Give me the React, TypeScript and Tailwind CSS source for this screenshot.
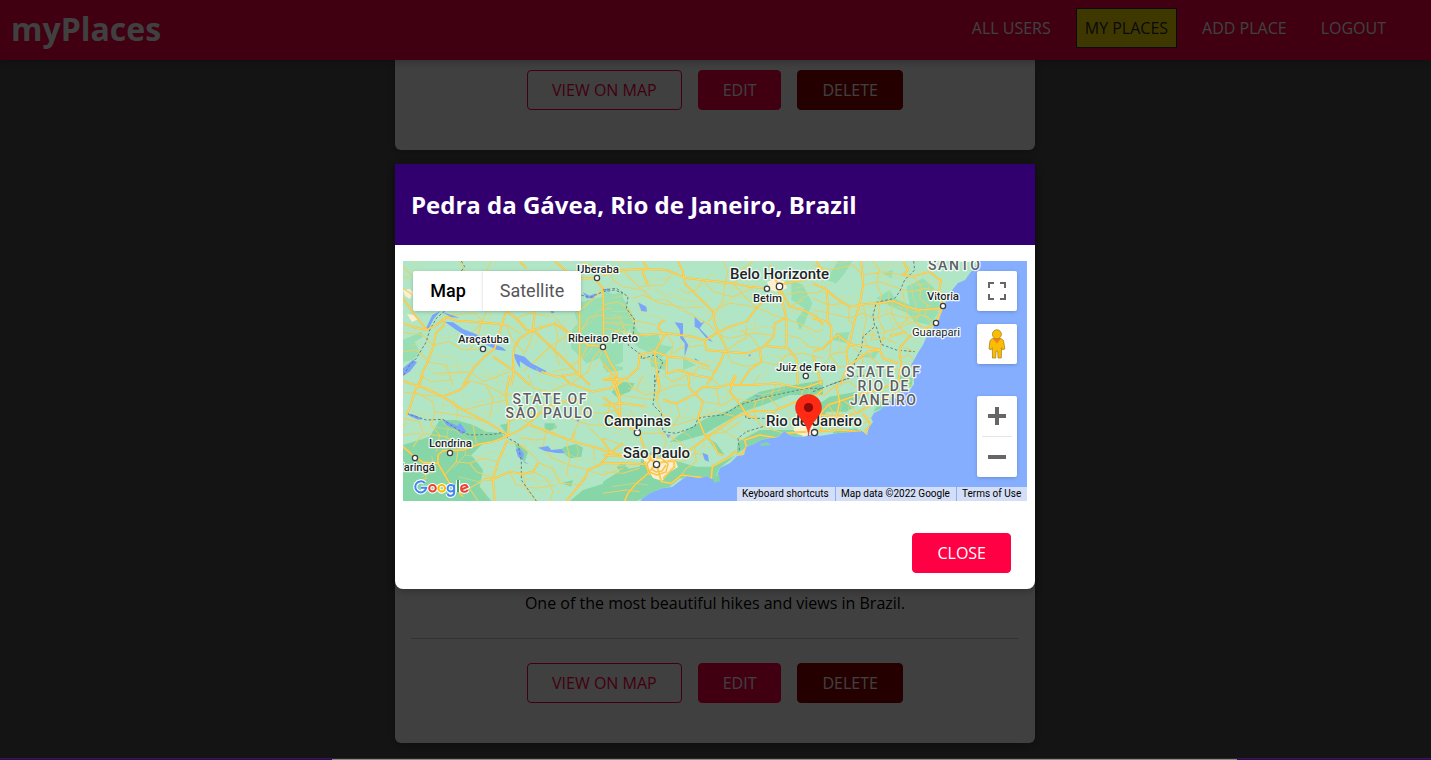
import type { ReactNode } from 'react';

const openSans = "font-['Open_Sans',sans-serif]";
const roboto = "font-[Roboto,sans-serif]";

function Button({ kind = 'solid', children }: { kind?: 'solid' | 'inverse' | 'danger'; children: ReactNode }) {
  const look = {
    solid: 'border-[#ff0044] bg-[#ff0044] text-white',
    inverse: 'border-[#ff0044] bg-transparent text-[#ff0044]',
    danger: 'border-[#900000] bg-[#900000] text-white',
  }[kind];
  return <button className={`h-10 shrink-0 rounded border px-6 text-base leading-[22px] ${look}`}>{children}</button>;
}

function PlaceActions() {
  return (
    <div className="flex justify-center gap-4">
      <Button kind="inverse">VIEW ON MAP</Button>
      <Button>EDIT</Button>
      <Button kind="danger">DELETE</Button>
    </div>
  );
}

const LAND =
  'M0 0H576L562 19 555 22 550 28 545 35 543 41 540 47 536 59 531 65 529 71 523 77 520 84 516 90 511 99 508 104 511 112 511 123 507 129 499 130 493 137 484 142 477 149 471 152 468 157 470 161 466 166 464 174 459 170 449 171 435 172 417 175 409 173 401 176 388 175 381 170 375 176 367 177 358 179 351 183 343 186 341 194 334 195 327 202 317 207 314 215 309 218 304 215 296 217 284 215 277 220 269 226 260 227 247 232 240 237 237 240H0Z';

// Each sheet holds paths drawn at three times the map's scale, with its own offset.
type Sheet = { x: number; y: number; forest: string; water: string; major: string; minor: string; border: string };

const SHEETS: Sheet[] = [
  {
    x: 0,
    y: -6,
    forest:
      'M535 140L600 125 660 110V320L610 345 590 310 550 325 505 280 498 235 525 205 515 175ZM0 255L55 230 60 245 35 260 50 290 30 315 0 320ZM605 330L660 335V345L610 352Z',
    water:
      'M125 200L150 202 180 222 220 238 245 255 300 278 310 288 280 284 235 262 200 250 160 225ZM330 295L365 305 385 325 430 348 425 357 390 343 370 332 350 318 352 340 342 325ZM0 340L30 315 42 322 20 350 0 362ZM88 180L112 168 92 192 75 225 70 218ZM540 112L560 122 578 115 572 130 550 130ZM440 155L455 174 445 174ZM115 170L170 188 145 187Z',
    major:
      'M0 205L35 218 70 225 100 210 130 185 160 197 210 200 250 203 310 209M125 185L122 212 98 235 92 270 75 318 58 352 50 390M0 130L35 180 70 222M310 168L295 215 285 250 275 280 245 305 215 335 180 390M310 168L340 190 370 225 390 225 455 205 500 238 555 270 600 275M530 70L575 70 600 100 602 200 600 275 620 320 640 350 645 380M390 225L350 250 333 280 330 320 332 350 325 390M390 225L470 300 525 355 560 390M270 305L330 345 380 390M530 168L530 360M350 18L370 40M455 18L490 48M395 168L390 225M530 355L460 365 415 350',
    minor:
      'M0 35L25 60M170 18L185 48M265 18L250 48M535 20L575 35 660 45M0 290L40 285 75 315M0 232L60 240 90 270 140 260 180 285 240 282M70 320L130 330 150 390M90 355L200 350 240 380 320 350M110 200L150 180 215 175 240 200 210 230 190 265M310 209L350 235M310 210L325 250 360 290M250 170L235 205 225 245 200 285M340 190L380 175 440 185M440 168L475 210 510 245M390 225L380 265 360 300M455 205L465 245 455 290 470 330M500 238L440 275 400 315 360 350M555 270L535 310 500 340 450 350M600 275L570 310 555 350 500 390M600 100L550 150 520 175M603 180L560 185 540 220 500 250M600 200L650 210M600 260L640 230 660 230M0 100L30 120M0 65L20 70',
    border: 'M175 18L185 35 175 48M125 168L100 190 80 225 70 260 55 285 40 310 20 330 0 365M535 120L560 128 600 110 635 105 660 115',
  },
  {
    x: 200,
    y: -6,
    forest:
      'M0 105L60 128 80 165 95 190 75 230 0 215ZM565 75L600 90 628 145 605 205 590 225 580 195 605 160 565 135ZM85 190L105 230 130 245 165 235 175 270 210 275 175 310 110 280 80 255ZM140 305L190 315 185 345 145 335ZM0 325L60 345 0 340ZM240 310L280 330 240 345Z',
    water:
      'M105 142L130 155 132 170 115 168ZM215 202L240 205 240 245 256 270 245 305 245 265 232 250 230 225ZM275 185L295 205 305 198 290 220 330 262 315 255 285 220 275 215ZM435 300L445 298 440 305ZM275 310L290 318 275 314ZM0 105L15 100 20 110Z',
    major:
      'M0 60L60 45 120 42 190 45 245 68 300 75 390 85 440 95 490 100M225 18L240 50 245 85 300 140 330 170 335 205 350 240 370 280M120 18L130 35 120 55 135 90M500 120L460 160 430 200 380 215 340 235 305 257 270 245 190 235 110 240M155 290L185 240 165 220 170 205 185 195M155 290L110 298 105 340 70 372 0 375M155 290L200 305 250 310 320 335M305 257L310 285 365 290 430 295 470 282 485 272 510 275 555 280 580 310 585 390M525 105L540 145 550 190 550 280M370 280L350 325 325 370 310 390M470 282L475 320 440 345 410 390M500 30L525 90 600 75 640 60 660 75M530 100L560 155 600 165 640 185 660 210M485 272L512 245 515 205 545 190M192 305L190 355 230 345 270 360 320 368M155 290L165 390M640 18L660 50M0 150L0 165M0 325L40 370 45 390',
    minor:
      'M20 45L30 75 60 95 120 105 150 135 190 135 225 160 300 155M60 45L105 95 180 90 205 60M90 130L120 120 170 145 235 155M300 75L280 105 250 115 230 100M300 75L330 110 390 125 450 100M360 18L375 50 365 90 360 135 340 170 315 200M450 18L410 50 395 90 430 130 460 155M320 170L380 145 430 150 480 165M0 150L45 140 80 165 90 195 160 210M0 190L50 190 70 235M0 220L60 230 110 240M190 235L210 265 205 300M350 240L380 250 450 235 510 240M365 290L400 265 430 250 430 210M470 282L450 250 415 225M370 290L385 320 430 335 470 325M475 320L520 330 550 300 600 295 660 310M480 165L510 180 545 190 600 210 640 230 660 225M550 240L590 250 620 275 660 280M340 235L320 210 295 195 240 165M200 305L230 280 300 270M110 298L150 320 190 330M270 360L285 335 340 350M320 368L350 390M600 75L620 50M550 120L590 110 640 115 660 105M560 155L600 135',
    border: 'M0 105L40 100 75 125 70 160 95 195 90 245 75 270 115 300 115 312 155 300 180 320 165 355 155 390',
  },
  {
    x: 410,
    y: -6,
    forest:
      'M75 18H118L95 55 70 85 40 75ZM190 130L230 105 245 130 290 150 280 95 330 70 360 95 380 130 375 175 350 210 305 200 285 175 235 155ZM70 235L110 230 100 265 60 255ZM210 55L240 45 235 70ZM140 305L200 285 185 310Z',
    water: '',
    major:
      'M145 18L150 90 140 150 125 195 110 265 100 290 105 335 80 390M0 85L35 100 70 130 110 155 150 148 200 145 240 138 280 155 320 165 385 160M385 70L378 110 390 155 372 195 370 205 320 230 290 245 262 275 260 300 265 325 255 390M0 190L45 200 55 215 55 255 75 240 110 268 165 275 200 285 210 310 255 325M40 105L45 150 43 200M270 18L285 45 270 60 300 65 350 50 380 75M105 335L165 290 200 285M230 245L280 230M0 290L30 280 55 255M0 300L25 390',
    minor:
      'M0 30L50 45 120 30 150 60 210 50 270 60M150 90L200 80 245 95 290 110 340 100 385 110M180 18L200 45 190 85 205 120 200 145M0 130L45 150 100 145M0 165L50 175 110 190 150 175 185 190 230 175 280 190 330 180 350 190M150 148L160 190 150 240 165 275M200 145L195 190 215 230 200 285M215 230L270 215 300 200 340 220M240 138L235 175 260 220 290 245M280 155L285 190 260 215M320 165L310 200 330 230M55 255L50 300 75 335 105 335M100 290L60 295 30 330M110 155L105 195 125 210M110 265L150 305 145 350 180 390M165 300L200 330 255 345 300 335M255 310L290 300 300 315M265 275L295 285M180 230L175 255 215 250 250 265M350 50L365 18M300 65L325 95 320 130 350 155M270 110L275 155M150 240L190 240',
    border: 'M302 18L305 45 275 75 260 110 245 130 190 142 180 180 185 215 150 245 145 285 125 320 120 365 50 390M190 215L205 268 250 285 305 290',
  },
  {
    x: 0,
    y: 114,
    forest:
      'M110 135L160 135 210 150 250 170 300 175 300 190 240 205 205 240 240 285 230 335 265 378H0V210L80 185ZM425 145L455 145 462 158 440 167 425 160ZM485 215L520 207 540 218 535 245 500 250 470 225ZM500 378L540 345 620 320 660 310V378ZM290 150L315 145 310 175ZM335 205L355 210 375 230 365 260 350 250ZM475 325L510 315 505 335Z',
    water:
      'M12 115L35 120 60 132 45 134 20 123ZM120 133L145 145 165 153 170 143 180 155 190 170 175 178 165 165 130 150ZM405 218L435 213 445 225 475 222 485 235 460 234 425 228ZM338 222L350 220 362 235 360 255 345 245ZM360 258L378 267 365 264ZM520 135L530 132 525 142Z',
    major:
      'M60 0L35 50 20 100 10 120M0 18L50 35 120 65 180 105 250 140 313 180M320 0L308 60 318 110 315 180M200 18L170 45 120 65M315 183L350 165 375 148 430 168 510 200 570 215 620 232 660 240M375 148L410 115 435 95 520 70M475 0L500 25 570 50 620 40 660 20M515 170L505 200M315 183L270 200 230 207 180 225 120 227 105 240 105 265 125 300 140 325 180 365M0 215L35 245 60 262 105 265M313 195L285 260 270 310 275 378M270 312L320 290 360 297 390 290 405 265M245 313L270 315M660 205L620 235 590 270 555 285 545 310 490 378M595 190L625 235M620 0L640 50 655 90',
    minor:
      'M0 50L60 60 120 65M35 50L90 80 95 110 85 150 110 180 100 230M50 0L85 20 150 15M0 130L50 140 60 175 30 215M10 140L0 160M60 175L130 185 180 225M95 110L160 120 210 130 250 140M150 75L165 105 160 130M200 18L250 30 305 60M180 105L240 90 310 75M250 35L270 70 260 130M210 150L220 205M313 60L370 55 410 80 435 95M320 110L370 115 410 115M315 140L350 130 380 145M375 0L390 40 440 50 500 25M520 70L540 110 515 170M430 168L420 215 450 250 500 270 555 285M350 190L400 195 430 190M350 210L390 240 410 265 450 280 470 325 540 330M315 200L370 215M285 260L240 250 200 265 160 260 125 300M160 260L165 225M270 310L220 290 200 265M320 290L340 330 400 340 460 330M360 297L370 340 400 378M390 290L430 310 450 350 440 378M490 200L500 250 490 300M570 215L575 255M560 160L590 190M500 130L560 150 620 150 660 165M550 285L600 300 660 280M200 340L245 313M140 325L200 340 225 378M60 262L70 310 30 325M0 180L50 175M540 110L600 115 660 100',
    border: 'M10 115L70 135 120 133 165 165 200 180 270 178 300 172 315 190 345 205 355 260 355 315 400 378',
  },
  {
    x: 200,
    y: 114,
    forest:
      'M0 320L55 285 110 275 120 235 165 230 210 255 280 275 330 275 400 240 405 200 470 165 580 165 600 185 530 190 430 215 350 280 330 320 230 310 200 335 100 378H0ZM200 200L250 165 310 130 380 105 410 85 470 50 540 35 660 15V60L560 60 480 90 420 110 360 145 300 180 230 200ZM25 50L60 20 95 25 80 50 40 65ZM310 185L340 205 365 240 345 235ZM40 275L60 262 80 285 60 300Z',
    water: 'M298 233L315 240 318 260 305 255ZM190 178L203 180 195 190ZM455 60L475 62 460 66Z',
    major:
      'M0 240L70 245 120 240 160 265 215 255 260 225 310 190 350 160 400 125 450 107 510 110 580 80 640 60 660 45M0 65L30 90 60 145 110 175 125 225 155 260M0 10L35 15 50 60 50 110 55 150M0 90L60 85 130 95M165 0L170 35 160 75M160 265L130 300 100 325 75 355 65 378M160 265L175 320 205 325 235 300 270 305 325 310 328 275 380 245 395 230 415 240 430 215 425 195 470 180 530 190 545 175 610 170M255 0L260 40 300 80 285 130 305 180 330 205 345 235 360 240M300 35L345 38 385 25 395 0M400 0L380 50 420 100 430 120 460 130M300 35L270 60 220 85 180 75M380 30L450 30 520 25 600 40 660 20M190 230L210 245 215 275 180 310M125 260L140 300M0 265L65 265 125 268',
    minor:
      'M60 0L90 40 130 60 165 50 220 30 255 30M50 60L110 70 160 75 180 120 165 160 190 200 175 240M80 105L100 130 150 140 220 150 285 130M110 175L180 175 230 200 250 225M220 85L230 120 210 155M300 80L360 90 390 70 450 80 520 60M285 130L340 110 400 125M305 180L370 170 410 140M350 160L400 190 425 195M450 107L470 150 510 165 545 175M510 110L530 135 580 130 640 140 660 130M0 190L60 210 120 240M0 290L60 295 110 280M250 0L210 20 180 0M340 38L350 90M450 30L470 0M520 25L500 70 530 100M600 40L590 80M305 190L275 215 280 260 250 280 235 300M0 355L70 345 110 350M190 260L240 260 275 235 310 240M20 90L10 130 60 145M460 80L450 107M120 0L100 40',
    border: 'M155 0L155 50 150 90 175 115 180 170 220 175 275 155 285 130 310 125 360 120 410 90 470 70 540 55 610 40 660 40M485 130L430 130 425 115M480 155L430 170 405 190 410 230',
  },
  {
    x: 410,
    y: 114,
    forest: 'M0 100L50 65 130 50 150 80 100 110 40 110 20 150 0 145ZM60 170L130 160 150 175 60 178ZM255 0L300 10 295 35 265 40ZM200 80L240 70 210 100 180 110Z',
    water: 'M90 170L130 167 150 175 125 174Z',
    major:
      'M25 165L20 120 45 90 90 75 150 55 200 45 250 20M20 120L70 125 130 115 190 80 245 55M150 115L175 150 158 165 160 180M70 125L80 80 70 30M0 170L70 165 150 170',
    minor:
      'M0 60L35 60 70 30 110 20 150 55M30 150L85 145 130 150 165 140M45 90L60 110 50 145M90 75L115 95 130 115M190 80L170 50M245 55L270 35 295 30M200 45L220 65M250 20L290 10M85 145L80 115',
    border: 'M0 50L50 30 120 5 190 0',
  },
];

type Place = { text: string; x: number; y: number; w: number; size: number; weight?: number; color?: string };

const PLACES: Place[] = [
  { text: 'Uberaba', x: 195, y: 12, w: 42, size: 11.5 },
  { text: 'Belo Horizonte', x: 376.5, y: 18, w: 99, size: 15 },
  { text: 'Betim', x: 364.5, y: 40.6, w: 29, size: 11.5 },
  { text: 'Vitoria', x: 540, y: 39, w: 32, size: 11.5 },
  { text: 'Guarapari', x: 533, y: 75, w: 48, size: 11.5, weight: 400 },
  { text: 'Araçatuba', x: 80.5, y: 82, w: 51, size: 11.5 },
  { text: 'Ribeirao Preto', x: 200, y: 81, w: 70, size: 11.5 },
  { text: 'Juiz de Fora', x: 403, y: 110, w: 60, size: 11.5 },
  { text: 'Campinas', x: 234.5, y: 165.4, w: 67, size: 15 },
  { text: 'São Paulo', x: 253.5, y: 197.4, w: 67, size: 15 },
  { text: 'Rio de Janeiro', x: 411, y: 164.6, w: 96, size: 15 },
  { text: 'Londrina', x: 47.5, y: 185.7, w: 43, size: 11.5 },
  { text: 'Maringá', x: 11.5, y: 209.8, w: 41, size: 11.5 },
  { text: 'STATE OF', x: 146.5, y: 143.3, w: 74, size: 14, color: '#5b6064' },
  { text: 'SÃO PAULO', x: 146, y: 157.3, w: 87, size: 14, color: '#5b6064' },
  { text: 'STATE OF', x: 480, y: 116.3, w: 74, size: 14, color: '#5b6064' },
  { text: 'RIO DE', x: 480, y: 130.3, w: 51, size: 14, color: '#5b6064' },
  { text: 'JANEIRO', x: 480, y: 144.3, w: 66, size: 14, color: '#5b6064' },
  { text: 'SANTO', x: 551, y: 9.3, w: 52, size: 14, color: '#5b6064' },
];

const DOTS = [
  [194, 17, 2.6], [376.5, 25.4, 3.2], [364, 27.7, 2.6], [540, 45, 2.6], [533, 62, 2.6], [80, 88, 2.6], [200, 86, 2.6],
  [402.8, 115, 2.6], [234.4, 171.6, 3.1], [253.5, 203.5, 3.1], [411.5, 171.6, 3.1], [47, 192, 2.6], [12, 197, 2.6],
];

function MapDrawing() {
  return (
    <svg width="624" height="240" viewBox="0 0 624 240" className="block" fill="none">
      <defs>
        <clipPath id="land"><path d={LAND} /></clipPath>
      </defs>
      <rect width="624" height="240" fill="#85aeff" />
      <path d={LAND} fill="#b0e6c5" />
      <path d="M357 183l7-2 4 3-10 1zM310 217l6-4 1 7-6 2z" fill="#81d6a4" />
      <g clipPath="url(#land)">
        {SHEETS.map((s, i) => (
          <path key={i} d={s.forest} fill={i < 3 ? '#97deb3' : '#86d6a7'} transform={`translate(${s.x} ${s.y}) scale(.33333)`} />
        ))}
        <path d="M0 29l7-1 3 4-3 6-5-3zM4 53l7 1 5 4-7 3zM364 21l8-3 9 2 3 7-8 4-9-2zM240 197l7-3 14 3 11 2 3 7-8 5-8 9-9-3-6-10zM390 168l8-6 12 2 0 9-8 2-8-2z" fill="#fcefd0" />
        {SHEETS.map((s, i) => (
          <g key={i} transform={`translate(${s.x} ${s.y}) scale(.33333)`} strokeLinejoin="round">
            <path d={s.minor} stroke="#e6d675" strokeWidth="2.4" opacity=".75" transform="translate(26 -20)" />
            <path d={s.minor} stroke="#ecd063" strokeWidth="3.2" />
            <path d={s.water} fill="#79a5fa" />
            <path d={s.border} stroke="#65827d" strokeWidth="3" strokeDasharray="8 6" />
            <path d={s.major} stroke="#f7c23a" strokeWidth="5.8" />
            <path d={s.major} stroke="#ffdd78" strokeWidth="2.2" />
          </g>
        ))}
        <path d="M244 203l5-6 9 0 7 6-2 8-9 3-8-3zM248 208l5 3 6-1 4-6" stroke="#f5c44b" strokeWidth="1.5" />
      </g>
      {DOTS.map(([x, y, r]) => (
        <circle key={`${x}-${y}`} cx={x} cy={y} r={r} fill="#fff" stroke="#3b3f43" strokeWidth="1.3" />
      ))}
      <g className={roboto} stroke="#fff" strokeWidth="2.6" strokeLinejoin="round" textAnchor="middle">
        {PLACES.map((p) => (
          <text
            key={`${p.text}-${p.x}`}
            x={p.x}
            y={p.y}
            fontSize={p.size}
            fontWeight={p.weight ?? 500}
            fill={p.color ?? '#202528'}
            textLength={p.w}
            paintOrder="stroke"
            strokeOpacity=".85"
          >
            {p.text}
          </text>
        ))}
      </g>
      <path d="M405.500 175c-.6-9-4-12.500-8-17.500-2.800-3.500-5-6.500-5-11a13 13 0 0 1 26 0c0 4.500-2.200 7.500-5 11-4 5-7.400 8.500-8 17.500z" fill="#ff2a14" stroke="#d3200f" strokeWidth=".5" />
      <circle cx="405.500" cy="146.500" r="4.600" fill="#900a0a" />
    </svg>
  );
}

function GoogleMark() {
  return (
    <svg width="60" height="24" viewBox="0 0 60 24" className="absolute bottom-px left-2" fill="none">
      {[['#fff', 4.2], ['', 2]].map(([halo, w]) => (
        <g key={String(w)} strokeWidth={w} stroke={halo ? '#fff' : undefined}>
          <path d="M13.700 7a5.500 5.500 0 1 0 1.500 4.800H10" stroke={halo ? '#fff' : '#4285f4'} />
          <circle cx="21.500" cy="12.300" r="3.300" stroke={halo ? '#fff' : '#ea4335'} />
          <circle cx="30.700" cy="12.300" r="3.300" stroke={halo ? '#fff' : '#fbbc04'} />
          <path d="M43.200 8.500V16c0 4.800-5.600 4.800-6.700 1.600M43.200 12.300a3.300 3.300 0 1 1-6.600 0 3.300 3.300 0 0 1 6.600 0z" stroke={halo ? '#fff' : '#4285f4'} />
          <path d="M47 4v12.500" stroke={halo ? '#fff' : '#34a853'} />
          <path d="M50.300 13.500l6.200-2.600c-1.100-2.800-6.400-2.400-6.400 1.500 0 4 5 4.300 6.600 1.500" stroke={halo ? '#fff' : '#ea4335'} />
        </g>
      ))}
    </svg>
  );
}

const controlShadow = 'rounded-xs bg-white shadow-[0_1px_4px_-1px_rgba(0,0,0,0.3)]';

function MapPanel() {
  return (
    <div className={`relative h-60 w-[624px] overflow-hidden ${roboto}`}>
      <MapDrawing />
      <div className={`absolute top-2.5 left-2.5 flex h-10 text-lg leading-10 ${controlShadow}`}>
        <button className="w-[70px] text-center font-medium text-black">Map</button>
        <button className="w-[98px] text-center text-[#565656] shadow-[-1px_0_2px_rgba(0,0,0,0.1)]">Satellite</button>
      </div>
      <div className={`absolute top-2.5 right-2.5 flex size-10 items-center justify-center ${controlShadow}`}>
        <svg width="18" height="18" viewBox="0 0 18 18" fill="#666"><path d="M0 0v6h2V2h4V0zM12 0v2h4v4h2V0zM0 12v6h6v-2H2v-4zM16 12v4h-4v2h6v-6z" /></svg>
      </div>
      <div className={`absolute top-[63px] right-2.5 flex size-10 items-center justify-center ${controlShadow}`}>
        <svg width="18" height="30" viewBox="0 0 18 30">
          <path d="M4.300 9.500h8.800L15.500 11.500 16.800 20l-2.200.7-1.100-2-.2 10.300h-3.200l-.4-7H8.100l-.4 7H4.500L4.300 18.700l-1.100 2L1 20l1-8.500z" fill="#fbbc04" stroke="#a9861f" strokeWidth=".8" strokeLinejoin="round" />
          <path d="M5 9.800h7.800l-3.900 4.700z" fill="#f57c1f" />
          <circle cx="8.900" cy="5.300" r="4.500" fill="#fbbc04" stroke="#a9861f" strokeWidth=".8" />
        </svg>
      </div>
      <div className={`absolute top-[135px] right-2.5 flex h-[81px] w-10 flex-col items-center ${controlShadow}`}>
        <div className="flex h-10 items-center"><svg width="18" height="18" viewBox="0 0 18 18" fill="#666"><path d="M7 0h4v7h7v4h-7v7H7v-7H0V7h7z" /></svg></div>
        <div className="h-px w-[30px] bg-[#e6e6e6]" />
        <div className="flex h-10 items-center"><svg width="18" height="4" fill="#666"><path d="M0 0h18v4H0z" /></svg></div>
      </div>
      <GoogleMark />
      <div className="absolute right-0 bottom-0 flex h-3.5 gap-px text-[10px] leading-[14px] whitespace-nowrap text-black">
        <span className="w-[98px] bg-[#d4dff7] pl-[5px]">Keyboard shortcuts</span>
        <span className="w-[120px] bg-[#d4dff7] pl-[5px]">Map data ©2022 Google</span>
        <span className="w-[70px] bg-[#d4dff7] pl-[5px]">Terms of Use</span>
      </div>
    </div>
  );
}

export default function App() {
  return (
    <div className={`relative h-[760px] w-[1431px] overflow-hidden bg-[#505050] text-base ${openSans}`}>
      <header className="relative z-10 flex h-[60px] items-center justify-between bg-[#ff0044] pr-9 pl-[11px] text-white shadow-[0_2px_8px_rgba(0,0,0,0.26)]">
        <h1 className="pb-0.5 text-[32px] leading-[58px] font-bold">myPlaces</h1>
        <nav className="flex items-center gap-4 pb-1">
          <a className="border border-transparent p-2 leading-[22px]">ALL USERS</a>
          <a className="border border-[#292929] bg-[#f8df00] p-2 leading-[22px] text-[#292929]">MY PLACES</a>
          <a className="border border-transparent p-2 leading-[22px]">ADD PLACE</a>
          <a className="border border-transparent p-2 leading-[22px]">LOGOUT</a>
        </nav>
      </header>

      <main className="ml-[395px] flex w-[640px] flex-col gap-4">
        <section className="h-[90px] rounded-b-md bg-white pt-2.5 shadow-[0_2px_8px_rgba(0,0,0,0.26)]">
          <PlaceActions />
        </section>
        <section className="flex h-[577px] flex-col justify-end rounded-md bg-white px-4 pb-10 shadow-[0_2px_8px_rgba(0,0,0,0.26)]">
          <p className="text-center leading-[22px] text-black">One of the most beautiful hikes and views in Brazil.</p>
          <hr className="mt-6 mb-6 border-t border-[#ccc]" />
          <PlaceActions />
        </section>
      </main>

      <div className="absolute inset-0 z-20 bg-black/75" />
      <div className="absolute inset-x-0 bottom-0 z-20 flex h-0.5 flex-col">
        <div className="h-px bg-[#282828]" />
        <div className="flex h-px bg-[#35007a]">
          <div className="ml-[332px] w-[905px] bg-[#8b8b8b]" />
        </div>
      </div>

      <div className="absolute top-[164px] left-[395px] z-30 flex h-[425px] w-[640px] flex-col rounded-b-lg bg-white shadow-[0_2px_8px_rgba(0,0,0,0.26)]">
        <header className="flex h-[81px] items-center bg-[#32006e] px-4">
          <h2 className="text-2xl leading-8 font-bold text-white">Pedra da Gávea, Rio de Janeiro, Brazil</h2>
        </header>
        <div className="px-2 py-4">
          <MapPanel />
        </div>
        <footer className="flex justify-end px-6 py-4">
          <Button>CLOSE</Button>
        </footer>
      </div>
    </div>
  );
}
